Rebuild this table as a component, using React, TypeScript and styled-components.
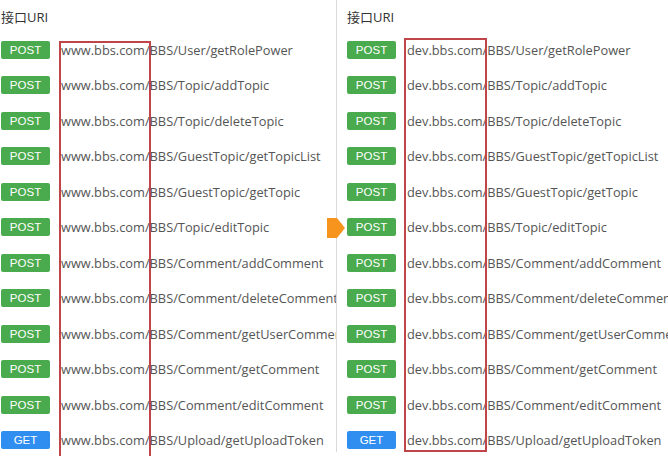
import React from "react";
import styled, { createGlobalStyle } from "styled-components";

const Global = createGlobalStyle`
  html, body { margin: 0; padding: 0; background: #fff; }
  body { font-family: "Open Sans", "Noto Sans CJK SC", sans-serif; }
`;

const Page = styled.div`
  position: relative;
  display: flex;
  width: 668px;
  height: 456px;
  overflow: hidden;
  background: #fff;
`;

const Panel = styled.div<{ $w: number; $pad: number }>`
  width: ${(p) => p.$w}px;
  flex: none;
  padding-left: ${(p) => p.$pad}px;
  box-sizing: border-box;
  overflow: hidden;
`;

const Divider = styled.div`
  width: 1px;
  flex: none;
  height: 452px;
  background: #d9d9d9;
`;

const Header = styled.div`
  height: 32px;
  line-height: 34px;
  font-size: 13px;
  color: #333;
  white-space: nowrap;
`;

const Row = styled.div`
  height: 35.5px;
  display: flex;
  align-items: center;
  gap: 11px;
  white-space: nowrap;
`;

const Badge = styled.span<{ $get?: boolean }>`
  flex: none;
  width: 49px;
  height: 18px;
  border-radius: 2px;
  background: ${(p) => (p.$get ? "#2f8ef0" : "#4aaa4e")};
  color: #fff;
  font-family: "Liberation Sans", Arial, sans-serif;
  font-size: 11.5px;
  line-height: 18px;
  text-align: center;
`;

const Uri = styled.span`
  font-size: 12.8px;
  color: #555;
`;

const RedBox = styled.div<{ $l: number; $t: number; $w: number; $h: number }>`
  position: absolute;
  left: ${(p) => p.$l}px;
  top: ${(p) => p.$t}px;
  width: ${(p) => p.$w}px;
  height: ${(p) => p.$h}px;
  border: 2px solid #c0454a;
  box-sizing: border-box;
  pointer-events: none;
`;

const Arrow = styled.svg`
  position: absolute;
  left: 327px;
  top: 217px;
`;

const paths = [
  "User/getRolePower",
  "Topic/addTopic",
  "Topic/deleteTopic",
  "GuestTopic/getTopicList",
  "GuestTopic/getTopic",
  "Topic/editTopic",
  "Comment/addComment",
  "Comment/deleteComment",
  "Comment/getUserComment",
  "Comment/getComment",
  "Comment/editComment",
  "Upload/getUploadToken",
];

function List({ host }: { host: string }) {
  return (
    <>
      <Header>接口URI</Header>
      {paths.map((p, i) => (
        <Row key={p}>
          <Badge $get={i === paths.length - 1}>{i === paths.length - 1 ? "GET" : "POST"}</Badge>
          <Uri>{host}/BBS/{p}</Uri>
        </Row>
      ))}
    </>
  );
}

export default function App() {
  return (
    <Page>
      <Global />
      <Panel $w={336} $pad={1}>
        <List host="www.bbs.com" />
      </Panel>
      <Divider />
      <Panel $w={331} $pad={10}>
        <List host="dev.bbs.com" />
      </Panel>
      <RedBox $l={59} $t={41} $w={92} $h={420} />
      <RedBox $l={404} $t={38} $w={83} $h={414} />
      <Arrow width="19" height="22" viewBox="0 0 19 22">
        <path d="M0 1 H10 L18 11 L10 21 H0 Z" fill="#f7941d" />
      </Arrow>
    </Page>
  );
}
